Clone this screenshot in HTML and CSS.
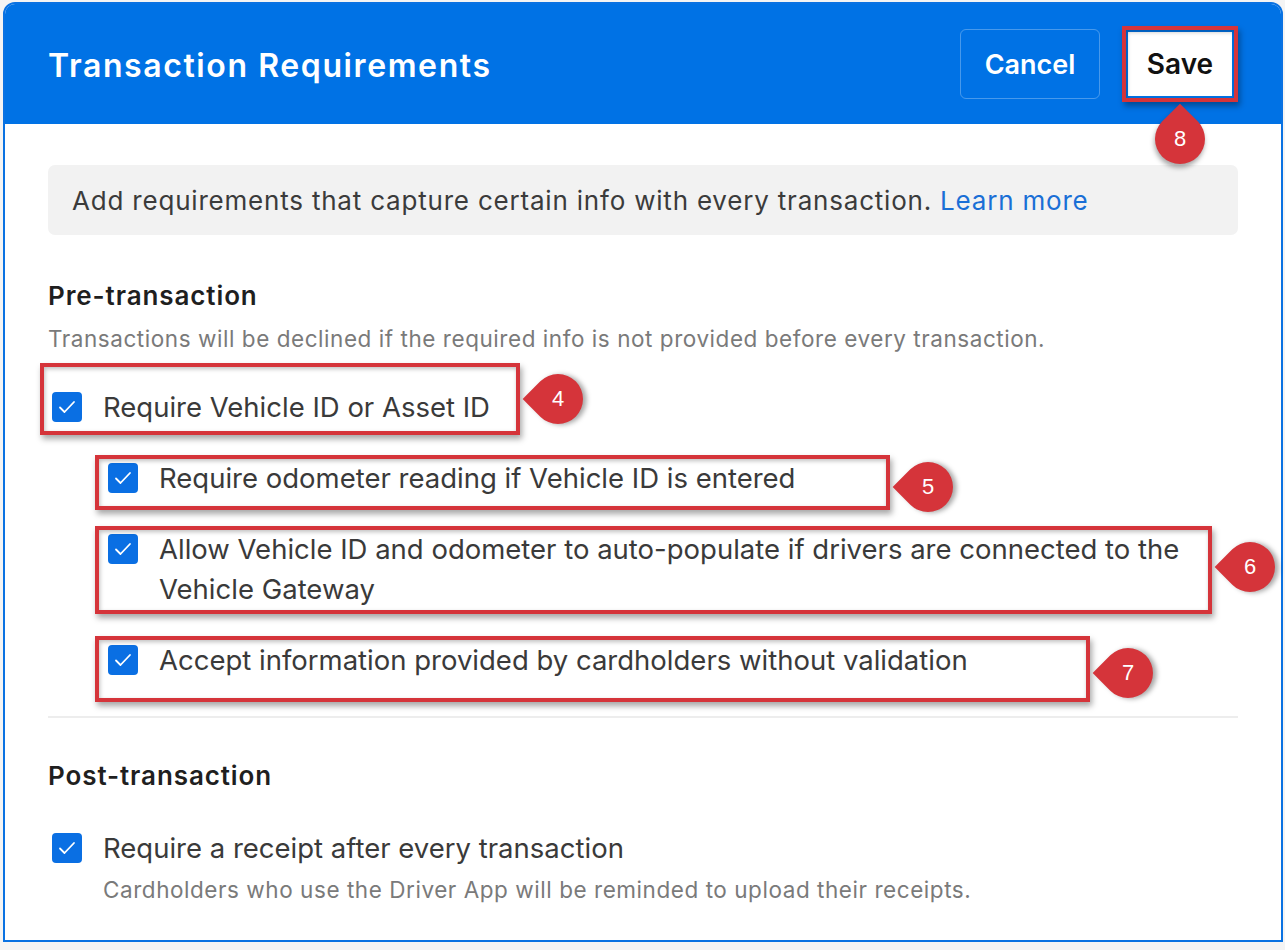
FILE: index.html
```html
<!DOCTYPE html>
<html lang="en">
<head>
    <meta charset="UTF-8">
    <meta name="viewport" content="width=device-width, initial-scale=1.0">
    <title>Transaction Requirements</title>
    <link rel="stylesheet" href="styles.css">
</head>
<body>
    <main class="panel">
        <header class="panel-head">
            <h1>Transaction Requirements</h1>
            <div class="actions">
                <button class="btn btn-ghost">Cancel</button>
                <div class="save-wrap">
                    <button class="btn btn-save">Save</button>
                    <span class="callout callout-save"><span class="pin pin-down">8</span></span>
                </div>
            </div>
        </header>

        <section class="panel-body">
            <p class="info">Add requirements that capture certain info with every transaction. <a href="#">Learn more</a></p>

            <h2>Pre-transaction</h2>
            <p class="hint">Transactions will be declined if the required info is not provided before every transaction.</p>

            <div class="check row-1">
                <span class="box"><svg viewBox="0 0 30 30"><rect width="30" height="30" rx="4"/><polyline points="8,15.5 12.5,20 22,10"/></svg></span>
                <span class="label">Require Vehicle ID or Asset ID</span>
                <span class="callout c1"><span class="pin">4</span></span>
            </div>

            <div class="nested">
                <div class="check row-2">
                    <span class="box"><svg viewBox="0 0 30 30"><rect width="30" height="30" rx="4"/><polyline points="8,15.5 12.5,20 22,10"/></svg></span>
                    <span class="label">Require odometer reading if Vehicle ID is entered</span>
                    <span class="callout c2"><span class="pin">5</span></span>
                </div>
                <div class="check row-3">
                    <span class="box"><svg viewBox="0 0 30 30"><rect width="30" height="30" rx="4"/><polyline points="8,15.5 12.5,20 22,10"/></svg></span>
                    <span class="label">Allow Vehicle ID and odometer to auto-populate if drivers are connected to the Vehicle Gateway</span>
                    <span class="callout c3"><span class="pin">6</span></span>
                </div>
                <div class="check row-4">
                    <span class="box"><svg viewBox="0 0 30 30"><rect width="30" height="30" rx="4"/><polyline points="8,15.5 12.5,20 22,10"/></svg></span>
                    <span class="label">Accept information provided by cardholders without validation</span>
                    <span class="callout c4"><span class="pin">7</span></span>
                </div>
            </div>

            <hr>

            <h2 class="post">Post-transaction</h2>
            <div class="check row-5">
                <span class="box"><svg viewBox="0 0 30 30"><rect width="30" height="30" rx="4"/><polyline points="8,15.5 12.5,20 22,10"/></svg></span>
                <div>
                    <span class="label">Require a receipt after every transaction</span>
                    <p class="hint sub">Cardholders who use the Driver App will be reminded to upload their receipts.</p>
                </div>
            </div>
        </section>
    </main>
</body>
</html>
```

FILE: styles.css
```css
body{
    margin: 0;
    background-color: #f4f4f4;
    font-family: Inter, "Noto Sans", sans-serif;
    color: #3a3a3a;
}

.panel{
    margin: 2px 2px 0 3px;
    height: 940px;
    box-sizing: border-box;
    border: 2px solid #0a72e2;
    border-radius: 12px 12px 0 0;
    background-color: white;
}

.panel-head{
    height: 120px;
    background-color: #0072e5;
    border-radius: 10px 10px 0 0;
    display: flex;
    align-items: center;
    justify-content: space-between;
    padding: 0 49px 0 43px;
}

h1{
    margin: 2px 0 0 0;
    color: white;
    font-size: 32px;
    font-weight: 600;
    letter-spacing: 1.6px;
}

.actions{
    display: flex;
    align-items: center;
    gap: 28px;
}

.btn{
    font-family: inherit;
    font-size: 27px;
    font-weight: 600;
    border-radius: 6px;
    cursor: pointer;
}

.btn-ghost{
    width: 140px;
    height: 70px;
    background: transparent;
    color: white;
    border: 1px solid rgba(255, 255, 255, 0.28);
}

.save-wrap{
    position: relative;
}

.btn-save{
    display: block;
    width: 104px;
    height: 64px;
    border: none;
    border-radius: 0;
    background-color: white;
    color: #111;
    font-size: 28px;
}

.panel-body{
    padding: 41px 43px 0 43px;
}

.info{
    margin: 0;
    height: 70px;
    display: flex;
    align-items: center;
    padding: 0 24px;
    border-radius: 7px;
    background-color: #f2f2f2;
    font-size: 26px;
    letter-spacing: 0.8px;
    color: #3b3b3b;
}

.info a{
    margin-left: 8px;
    color: #1a6fd6;
    text-decoration: none;
}

h2{
    margin: 45px 0 0 0;
    font-size: 26px;
    line-height: 32px;
    font-weight: 600;
    letter-spacing: 0.9px;
    color: #1f1f1f;
}

.hint{
    margin: 13px 0 0 0;
    font-size: 22.5px;
    line-height: 28px;
    letter-spacing: 0.55px;
    color: #7a7a7a;
}

.check{
    position: relative;
    display: flex;
    align-items: flex-start;
    gap: 21px;
    margin-left: 4px;
}

.box{
    flex: none;
    width: 30px;
    height: 40px;
    display: flex;
    align-items: center;
}

.box svg{
    width: 30px;
    height: 30px;
}

.box rect{
    fill: #0a6fe3;
}

.box polyline{
    fill: none;
    stroke: white;
    stroke-width: 1.8;
    stroke-linecap: round;
    stroke-linejoin: round;
}

.label{
    font-size: 27.5px;
    line-height: 40px;
    color: #3a3a3a;
}

.row-1{
    margin-top: 34px;
}

.nested{
    margin-left: 56px;
    display: flex;
    flex-direction: column;
    gap: 31px;
    margin-top: 31px;
}

.nested .check{
    margin-left: 4px;
}

hr{
    margin: 36px 0 0 0;
    border: none;
    border-top: 2px solid #ededed;
}

h2.post{
    margin-top: 42px;
}

.row-5{
    margin-top: 36px;
}

.hint.sub{
    margin-top: 8px;
}

/* annotation overlays */

.callout{
    position: absolute;
    z-index: 1;
    border: 4px solid #d5343a;
    box-shadow: 2px 4px 6px rgba(0, 0, 0, 0.35), inset 1px 2px 4px rgba(0, 0, 0, 0.25);
    pointer-events: none;
}

.c1{ left: -12px; top: -24px; width: 472px; height: 64px; }
.c2{ left: -13px; top: -3px; width: 787px; height: 47px; }
.c3{ left: -13px; top: -3px; width: 1109px; height: 80px; }
.c4{ left: -13px; top: -4px; width: 987px; height: 58px; }
.callout-save{ left: -6px; top: -6px; width: 108px; height: 68px; }

.pin{
    position: absolute;
    z-index: 2;
    isolation: isolate;
    left: calc(100% + 17px);
    top: 50%;
    width: 50px;
    height: 50px;
    margin-top: -25px;
    display: flex;
    align-items: center;
    justify-content: center;
    color: white;
    font-family: "Liberation Sans", Arial, sans-serif;
    font-size: 22px;
}

.pin::before{
    content: "";
    position: absolute;
    inset: 0;
    z-index: -1;
    background-color: #d5343a;
    border-radius: 0 50% 50% 50%;
    transform: rotate(-45deg);
    box-shadow: 2px 3px 5px rgba(0, 0, 0, 0.35);
}

.c2 .pin{ margin-top: -21px; }
.c3 .pin{ margin-top: -28px; }
.c4 .pin{ margin-top: -21px; }

.pin-down{
    left: 50%;
    top: calc(100% + 16px);
    margin: 0 0 0 -25px;
}

.pin-down::before{
    transform: rotate(45deg);
}
```
